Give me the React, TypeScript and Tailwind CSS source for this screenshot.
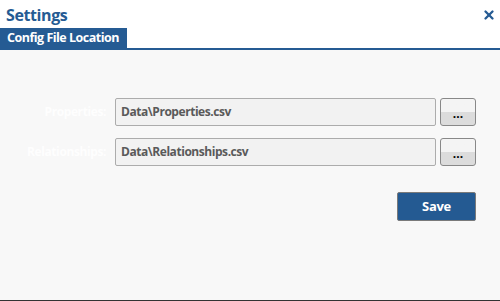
import { X } from 'lucide-react';

const rows = [
  { label: 'Properties:', value: 'Data\\Properties.csv' },
  { label: 'Relationships:', value: 'Data\\Relationships.csv' },
];

export default function App() {
  return (
    <div className="w-[500px] h-[301px] flex flex-col bg-white font-['Open_Sans',sans-serif] border-b border-[#333333]">
      {/* Title bar */}
      <div className="h-[28px] flex items-center justify-between pl-[6px] pr-[4px] pt-[2px]">
        <h1 className="text-[16px] font-bold text-[#255b93] leading-none tracking-[-0.4px]">Settings</h1>
        <button className="text-[#255b93]">
          <X size={14} strokeWidth={4} />
        </button>
      </div>

      {/* Tabs */}
      <div className="h-[22px] flex border-b-2 border-[#255b93]">
        <div className="w-[127px] bg-[#255b93] text-white text-[12.5px] font-bold flex items-center pl-[7px] tracking-[-0.5px]">
          Config File Location
        </div>
      </div>

      {/* Content */}
      <div className="flex-1 bg-[#f8f8f8] pt-[48px] pr-[24px]">
        <div className="flex flex-col gap-[12px]">
          {rows.map((row) => (
            <div key={row.label} className="flex items-center h-[28px]">
              <label className="w-[106px] text-right text-[12px] font-bold text-[#fefefe] tracking-[-0.4px]">
                {row.label}
              </label>
              <div className="ml-[9px] w-[321px] h-full flex items-center rounded-[2px] border border-[#acacac] bg-[#f2f2f2] pl-[5px] text-[12px] font-bold text-[#5a5a5a] tracking-[-0.45px]">
                {row.value}
              </div>
              <button className="ml-[4px] w-[36px] h-full rounded-[3px] border border-[#888888] bg-gradient-to-b from-[#f4f4f4] from-50% to-[#dcdcdc] to-50% text-[12px] font-bold text-black leading-none pt-[4px]">
                ...
              </button>
            </div>
          ))}
        </div>
        <div className="flex justify-end mt-[26px]">
          <button className="w-[79px] h-[29px] rounded-[2px] border border-[#7a7a7a] bg-[#245a92] text-white text-[13px] font-bold tracking-[-0.3px]">
            Save
          </button>
        </div>
      </div>
    </div>
  );
}
